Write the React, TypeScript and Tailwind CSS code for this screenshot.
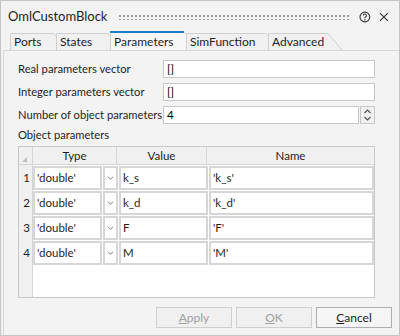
import React from 'react';

const font = { fontFamily: 'Lato, "Noto Sans", sans-serif' };

const Tab = ({ label, active, w }: { label: string; active?: boolean; w: number }) => {
  const h = active ? 19 : 17;
  return (
    <div className="relative shrink-0" style={{ width: w, height: h }}>
      <svg className="absolute inset-0" width={w + 14} height={h} viewBox={`0 0 ${w + 14} ${h}`}>
        <path
          d={`M0.5 ${h} V0.5 H${w - 2} L${w + 12} ${h}`}
          fill={active ? '#f7f7f7' : '#f0f0f0'}
          stroke="#d0d0d0"
        />
        {active && <line x1="0" y1="1" x2={w - 2} y2="1" stroke="#1a7fc4" strokeWidth="2" />}
      </svg>
      <span className={`relative block pl-[4px] leading-[16px] text-[12px] text-[#1e1e1e] ${active ? 'pt-[3px]' : 'pt-[1px]'}`}>{label}</span>
    </div>
  );
};

const TextRow = ({ label, value, spin }: { label: string; value: string; spin?: boolean }) => (
  <div className="flex items-center h-[18px]">
    <span className="w-[145px] whitespace-nowrap text-[11.2px] text-[#1e1e1e]">{label}</span>
    <div className="flex-1 h-[18px] flex">
      <div className="flex-1 bg-white border border-[#c8c8c8] px-[3px] text-[11.5px] leading-[16px]">{value}</div>
      {spin && (
        <div className="w-[15px] ml-[1px] flex flex-col border border-[#c8c8c8] bg-[#f0f0f0]">
          <svg width="13" height="8" viewBox="0 0 13 8"><path d="M3.5 6 L6.5 3 L9.5 6" fill="none" stroke="#555" strokeWidth="1.2" /></svg>
          <svg width="13" height="8" viewBox="0 0 13 8"><path d="M3.5 2 L6.5 5 L9.5 2" fill="none" stroke="#555" strokeWidth="1.2" /></svg>
        </div>
      )}
    </div>
  </div>
);

const rows = [
  ['k_s', "'k_s'"],
  ['k_d', "'k_d'"],
  ['F', "'F'"],
  ['M', "'M'"],
];

const Cell = ({ children, className = '' }: { children?: React.ReactNode; className?: string }) => (
  <div className={`bg-white border-2 border-[#d6d6d6] px-[2px] text-[11.5px] leading-[20px] text-[#1e1e1e] ${className}`}>{children}</div>
);

const App: React.FC = () => {
  return (
    <div className="w-[400px] h-[336px] bg-[#f3f3f3] border border-[#c4c4c4] flex flex-col" style={font}>
      <div className="h-[31px] shrink-0 flex items-center pl-[7px] pr-[10px]">
        <span className="text-[13px] text-[#1e1e1e] w-[112px]">OmlCustomBlock</span>
        <div className="w-[238px] h-[6px] bg-[radial-gradient(circle,#9a9a9a_0.8px,transparent_1px)] bg-[length:4px_4px]" />
        <svg className="ml-[9px]" width="12" height="12" viewBox="0 0 12 12">
          <circle cx="6" cy="6" r="5" fill="none" stroke="#333" strokeWidth="1.1" />
          <path d="M4.4 4.6 A1.6 1.6 0 1 1 6.6 6 Q6 6.3 6 7.2" fill="none" stroke="#333" strokeWidth="1.1" />
          <circle cx="6" cy="8.8" r="0.7" fill="#333" />
        </svg>
        <svg className="ml-[8px]" width="10" height="10" viewBox="0 0 10 10">
          <path d="M1 1 L9 9 M9 1 L1 9" stroke="#333" strokeWidth="1.2" />
        </svg>
      </div>
      <div className="flex items-end pl-[9px] h-[18px] shrink-0">
        <Tab label="Ports" w={46} />
        <Tab label="States" w={54} />
        <Tab label="Parameters" active w={76} />
        <Tab label="SimFunction" w={82} />
        <Tab label="Advanced" w={62} />
      </div>
      <div className="flex-1 flex flex-col border-l border-t border-[#d6d6d6] ml-[2px] pl-[14px] pr-[24px] pt-[9px]">
        <div className="flex flex-col gap-[5px]">
          <TextRow label="Real parameters vector" value="[]" />
          <TextRow label="Integer parameters vector" value="[]" />
          <TextRow label="Number of object parameters" value="4" spin />
        </div>
        <div className="text-[11.2px] text-[#1e1e1e] mt-[2px] h-[20px] leading-[18px]">Object parameters</div>
        <div className="h-[152px] border border-[#c8c8c8] bg-white flex flex-col">
          <div className="flex h-[18px] bg-[#f0f0f0] border-b border-[#d6d6d6] text-[11.5px] leading-[18px] text-[#1e1e1e]">
            <div className="w-[14px] border-r border-[#d6d6d6] flex items-end justify-start pl-[3px] pb-[2px]">
              <svg width="5" height="5" viewBox="0 0 5 5"><path d="M5 0 V5 H0 Z" fill="#c0c0c0" /></svg>
            </div>
            <div className="w-[84px] border-r border-[#d6d6d6] text-center">Type</div>
            <div className="w-[90px] border-r border-[#d6d6d6] text-center">Value</div>
            <div className="flex-1 text-center">Name</div>
          </div>
          <div className="flex flex-1">
            <div className="w-[14px] bg-[#f0f0f0] border-r border-[#d6d6d6]">
              {rows.map((_, i) => (
                <div key={i} className="h-[25px] text-[11.5px] leading-[25px] text-right pr-[2px] text-[#1e1e1e]">{i + 1}</div>
              ))}
            </div>
            <div className="flex-1 flex flex-col">
              {rows.map(([v, n]) => (
                <div key={v} className="flex h-[25px] gap-[1px] pt-[1px]">
                  <Cell className="w-[69px]">'double'</Cell>
                  <Cell className="w-[15px] flex items-center justify-center">
                    <svg width="8" height="6" viewBox="0 0 8 6"><path d="M1 1.5 L4 4.5 L7 1.5" fill="none" stroke="#777" strokeWidth="1.1" /></svg>
                  </Cell>
                  <Cell className="w-[89px]">{v}</Cell>
                  <Cell className="flex-1">{n}</Cell>
                </div>
              ))}
            </div>
          </div>
        </div>
        <div className="flex justify-end gap-[4px] mt-[9px] -mr-[17px]">
          <button className="w-[76px] h-[21px] border border-[#cfcfcf] bg-[#f0f0f0] text-[12px] text-[#a0a0a0]"><u>A</u>pply</button>
          <button className="w-[76px] h-[21px] border border-[#cfcfcf] bg-[#f0f0f0] text-[12px] text-[#a0a0a0]"><u>O</u>K</button>
          <button className="w-[76px] h-[21px] border border-[#adadad] bg-[#f5f5f5] text-[12px] text-[#1e1e1e]"><u>C</u>ancel</button>
        </div>
      </div>
    </div>
  );
};

export default App;
